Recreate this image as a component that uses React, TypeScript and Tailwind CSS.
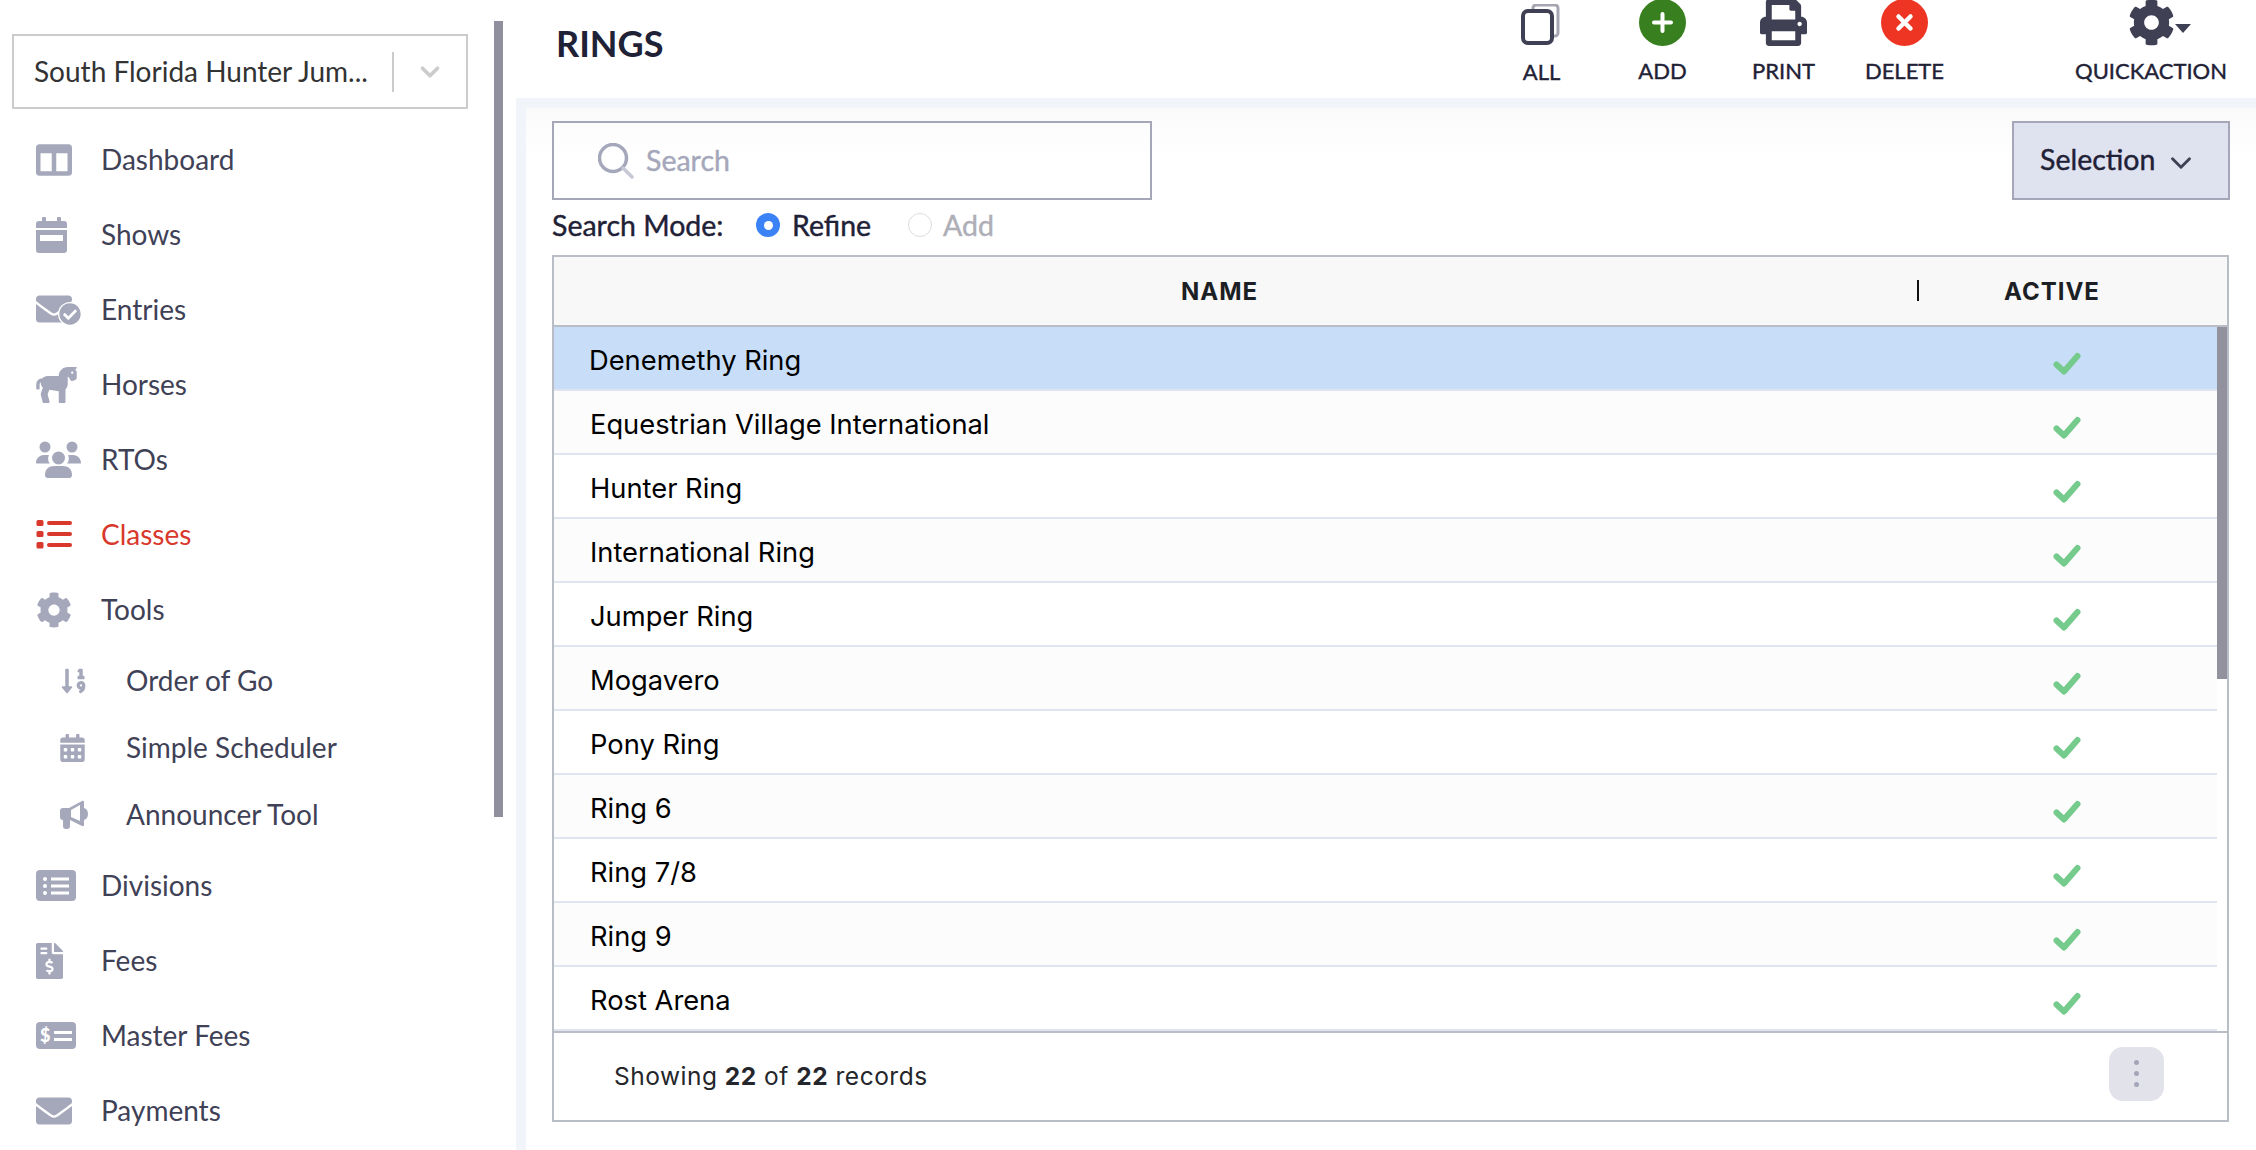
import type { ReactNode } from 'react';
import {
  FaCalendarAlt,
  FaCheckCircle,
  FaCog,
  FaColumns,
  FaEnvelope,
  FaFileInvoiceDollar,
  FaHorse,
  FaPrint,
  FaSortNumericDown,
} from 'react-icons/fa';
import { ChevronDown } from 'lucide-react';

const lato = 'font-["Lato",sans-serif]';
const inter = 'font-["Inter",sans-serif]';
const medium = '[-webkit-text-stroke:0.4px_currentColor]';

const rings = [
  'Denemethy Ring',
  'Equestrian Village International',
  'Hunter Ring',
  'International Ring',
  'Jumper Ring',
  'Mogavero',
  'Pony Ring',
  'Ring 6',
  'Ring 7/8',
  'Ring 9',
  'Rost Arena',
];

function ShowsIcon() {
  return (
    <svg viewBox="0 0 31 36" className="h-[36px] w-[31px]" fill="currentColor">
      <path d="M7 0h2a1 1 0 0 1 1 1v3h11V1a1 1 0 0 1 1-1h2a1 1 0 0 1 1 1v3h3a3 3 0 0 1 3 3v4H0V7a3 3 0 0 1 3-3h3V1a1 1 0 0 1 1-1z" />
      <path fillRule="evenodd" d="M0 13h31v20a3 3 0 0 1-3 3H3a3 3 0 0 1-3-3V13zm4 5v6h23v-6H4z" />
    </svg>
  );
}

function EntriesIcon() {
  return (
    <span className="relative block h-[30px] w-[45px]">
      <FaEnvelope className="absolute left-0 top-[-4px] h-[36px] w-[36px]" />
      <span className="absolute right-[-1px] top-[7px] flex h-[24px] w-[24px] items-center justify-center rounded-full bg-white">
        <FaCheckCircle className="h-[22px] w-[22px]" />
      </span>
    </span>
  );
}

function RtosIcon() {
  return (
    <svg viewBox="0 0 45 37" className="h-[37px] w-[45px]" fill="currentColor">
      <circle cx="9" cy="6" r="5.5" />
      <circle cx="36" cy="6" r="5.5" />
      <circle cx="22.5" cy="17" r="6.5" />
      <path d="M0 22c0-5 4-8 8-8h5c-1 2-1.500 6 1 8.500H1.500C.5 22.500 0 22.500 0 22z" />
      <path d="M45 22c0-5-4-8-8-8h-5c1 2 1.500 6-1 8.500h12.500c1 0 1.500 0 1.500-.5z" />
      <path d="M9 34c0-6 4-9 9-9h9c5 0 9 3 9 9 0 2-1 3-3 3H12c-2 0-3-1-3-3z" />
    </svg>
  );
}

function ClassesIcon() {
  return (
    <svg viewBox="0 0 36 29" className="h-[29px] w-[36px]" fill="currentColor">
      <rect x="0.500" y="0" width="7" height="6" rx="1.500" />
      <rect x="0.500" y="11" width="7" height="6" rx="1.500" />
      <rect x="0.500" y="22" width="7" height="6.500" rx="1.500" />
      <rect x="11" y="1" width="25" height="4" rx="2" />
      <rect x="11" y="12" width="25" height="4" rx="2" />
      <rect x="11" y="23" width="25" height="4" rx="2" />
    </svg>
  );
}

function AnnouncerIcon() {
  return (
    <svg viewBox="0 0 28 29" className="h-[29px] w-[28px]" fill="currentColor">
      <path d="M3 8h6l13-7c1-.500 2 0 2 1v23c0 1-1 1.500-2 1L10 20H3c-2 0-3-1-3-3v-6c0-2 1-3 3-3z" />
      <path fillRule="evenodd" d="M24 8c2.500.500 4 3 4 6s-1.500 5.500-4 6V8z" />
      <path d="M3 20h7v6c0 2-1 3-3 3H6c-2 0-3-1-3-3v-6z" />
      <path d="M11 10l9-5v16l-9-4z" fill="white" />
    </svg>
  );
}

function DivisionsIcon() {
  return (
    <svg viewBox="0 0 40 31" className="h-[31px] w-[40px]" fill="currentColor">
      <rect width="40" height="31" rx="4" />
      <circle cx="9" cy="9" r="2" fill="white" />
      <circle cx="9" cy="16" r="2" fill="white" />
      <circle cx="9" cy="23" r="2" fill="white" />
      <rect x="15" y="7.500" width="18" height="3" fill="white" />
      <rect x="15" y="14.500" width="18" height="3" fill="white" />
      <rect x="15" y="21.500" width="18" height="3" fill="white" />
    </svg>
  );
}

function MasterFeesIcon() {
  return (
    <svg viewBox="0 0 40 27" className="h-[27px] w-[40px]" fill="currentColor">
      <rect width="40" height="27" rx="4" />
      <rect x="18" y="9" width="18" height="3" fill="white" />
      <rect x="18" y="16" width="18" height="3" fill="white" />
      <text x="4" y="20" fontSize="18" fontWeight="900" fill="white" fontFamily="Lato, sans-serif">$</text>
    </svg>
  );
}

function CopyIcon() {
  return (
    <svg viewBox="0 0 39 41" className="-ml-[3px] mb-[1px] h-[41px] w-[39px]" fill="none">
      <path d="M12 5V4a3 3 0 0 1 3-3h19a3 3 0 0 1 3 3v25a3 3 0 0 1-3 3h-1" stroke="#a5a6b2" strokeWidth="3" />
      <rect x="2" y="7" width="29" height="32" rx="5" stroke="#3f4053" strokeWidth="4" fill="white" />
    </svg>
  );
}

function AddIcon() {
  return (
    <svg viewBox="0 0 47 47" className="h-[47px] w-[47px]">
      <circle cx="23.500" cy="23.500" r="23.500" fill="#38801f" />
      <path d="M23.500 15v17M15 23.500h17" stroke="white" strokeWidth="4" strokeLinecap="round" />
    </svg>
  );
}

function DeleteIcon() {
  return (
    <svg viewBox="0 0 47 47" className="h-[47px] w-[47px]">
      <circle cx="23.500" cy="23.500" r="23.500" fill="#ee3524" />
      <path d="M17.500 17.500l12 12M29.500 17.500l-12 12" stroke="white" strokeWidth="4.500" strokeLinecap="round" />
    </svg>
  );
}

function CheckIcon() {
  return (
    <svg viewBox="0 0 28 23" className="h-[23px] w-[28px] translate-y-[5px]" fill="none">
      <path d="M3.500 12.500l7.500 7L24.500 4" stroke="#74cb8c" strokeWidth="6" strokeLinecap="round" strokeLinejoin="round" />
    </svg>
  );
}

function NavItem({ icon, label, active }: { icon: ReactNode; label: string; active?: boolean }) {
  return (
    <div className={`flex h-[75px] items-center pl-[36px] ${active ? 'text-[#d9382c]' : 'text-[#a5a8bb]'}`}>
      <div className="flex w-[65px] items-center">{icon}</div>
      <span className={`-translate-y-[1.5px] text-[28px] ${active ? 'text-[#d9382c]' : 'text-[#3f4156]'}`}>{label}</span>
    </div>
  );
}

function SubItem({ icon, label }: { icon: ReactNode; label: string }) {
  return (
    <div className="flex h-[67px] items-center pl-[60px] text-[#a5a8bb]">
      <div className="flex w-[66px] items-center">{icon}</div>
      <span className="-translate-y-[1.5px] text-[28px] text-[#3f4156]">{label}</span>
    </div>
  );
}

function Action({ icon, label, low }: { icon: ReactNode; label: string; low?: boolean }) {
  return (
    <div className="flex w-[121px] flex-col items-center">
      <div className="flex h-[46px] items-end justify-center">{icon}</div>
      <span className={`text-[22px] leading-[21px] text-[#1f2136] ${medium} ${low ? 'mt-[15px]' : 'mt-[14px]'}`}>{label}</span>
    </div>
  );
}

function Sidebar() {
  return (
    <aside className={`relative h-full w-[516px] shrink-0 overflow-hidden bg-white ${lato}`}>
      <div className="absolute right-[13px] top-[21px] h-[796px] w-[9px] bg-[#8f8f9d]" />
      <div className="pl-[12px] pt-[34px]">
        <div className="flex h-[75px] w-[456px] items-center border-2 border-[#cccccc] pl-[20px]">
          <span className="w-[358px] -translate-y-[1px] whitespace-nowrap text-[28px] text-[#333333]">South Florida Hunter Jum...</span>
          <div className="mr-[21px] h-[40px] w-[2px] bg-[#cccccc]" />
          <ChevronDown className="h-[30px] w-[30px] text-[#cccccc]" strokeWidth={3} />
        </div>
      </div>
      <nav className="pt-[13px]">
        <NavItem label="Dashboard" icon={<FaColumns className="h-[36px] w-[36px]" />} />
        <NavItem label="Shows" icon={<ShowsIcon />} />
        <NavItem label="Entries" icon={<EntriesIcon />} />
        <NavItem label="Horses" icon={<FaHorse className="h-[36px] w-[41px]" />} />
        <NavItem label="RTOs" icon={<RtosIcon />} />
        <NavItem label="Classes" active icon={<ClassesIcon />} />
        <NavItem label="Tools" icon={<FaCog className="h-[36px] w-[36px]" />} />
        <SubItem label="Order of Go" icon={<FaSortNumericDown className="h-[28px] w-[28px]" />} />
        <SubItem label="Simple Scheduler" icon={<FaCalendarAlt className="h-[28px] w-[25px]" />} />
        <SubItem label="Announcer Tool" icon={<AnnouncerIcon />} />
        <NavItem label="Divisions" icon={<DivisionsIcon />} />
        <NavItem label="Fees" icon={<FaFileInvoiceDollar className="h-[36px] w-[27px]" />} />
        <NavItem label="Master Fees" icon={<MasterFeesIcon />} />
        <NavItem label="Payments" icon={<FaEnvelope className="h-[36px] w-[36px]" />} />
      </nav>
    </aside>
  );
}

function Header() {
  return (
    <header className={`flex h-[98px] shrink-0 items-start bg-white pl-[40px] ${lato}`}>
      <h1 className="mt-[21px] w-[925px] text-[36px] font-bold leading-[44px] text-[#1f2136]">RINGS</h1>
      <div className="flex">
        <Action label="ALL" low icon={<CopyIcon />} />
        <Action label="ADD" icon={<AddIcon />} />
        <Action label="PRINT" icon={<FaPrint className="h-[47px] w-[47px] text-[#3f4053]" />} />
        <Action label="DELETE" icon={<DeleteIcon />} />
        <div className="ml-[109px] flex w-[154px] flex-col items-center">
          <div className="flex h-[46px] items-end pl-[16px] text-[#3f4053]">
            <FaCog className="h-[47px] w-[47px]" />
            <span className="mb-[13px] h-0 w-0 border-x-[8px] border-t-[9px] border-x-transparent border-t-[#3f4053]" />
          </div>
          <span className={`mt-[14px] whitespace-nowrap text-[22px] leading-[21px] text-[#1f2136] ${medium}`}>QUICKACTION</span>
        </div>
      </div>
    </header>
  );
}

function RingsTable() {
  return (
    <div className={`mt-[14px] flex h-[867px] w-[1677px] flex-col border-2 border-[#b9bdc6] bg-white ${inter}`}>
      <div className="flex h-[70px] shrink-0 items-center border-b-2 border-[#b9bdc6] bg-[#f8f8f8] text-[24px] font-bold tracking-[1px] text-[#1c1f24]">
        <div className="w-[1363px] translate-y-[1px] pr-[32px] text-center">NAME</div>
        <div className="h-[21px] w-[2px] -translate-y-[1px] bg-[#111111]" />
        <div className="flex-1 translate-y-[1px] pl-[85px]">ACTIVE</div>
      </div>
      <div className="relative h-[704px] shrink-0 overflow-hidden">
        <div className="absolute right-[0px] top-0 h-[352px] w-[10px] bg-[#92929f]" />
        {rings.map((name, i) => (
          <div
            key={name}
            className={`mr-[10px] flex h-[64px] items-center justify-between border-b-2 border-[#e0e3f0] pl-[36px] pr-[136px] text-[27.300px] text-black ${
              i === 0 ? 'bg-[#c7ddf8]' : i % 2 === 1 ? 'bg-[#fcfcfc]' : 'bg-white'
            }`}
          >
            <span className={`translate-y-[3px] ${i === 0 ? '-ml-[1px]' : ''}`}>{name}</span>
            <CheckIcon />
          </div>
        ))}
      </div>
      <div className="flex flex-1 items-center justify-between border-t-2 border-[#b9bdc6] pl-[60px] pr-[63px]">
        <span className="text-[24.500px] tracking-[0.5px] text-[#24262b]">
          Showing <b className="font-bold">22</b> of <b className="font-bold">22</b> records
        </span>
        <button className="mb-[6px] flex h-[54px] w-[55px] flex-col items-center justify-center gap-[6px] rounded-[14px] bg-[#e2e3ea]">
          <span className="h-[5px] w-[5px] rounded-full bg-[#a3a5b8]" />
          <span className="h-[5px] w-[5px] rounded-full bg-[#a3a5b8]" />
          <span className="h-[5px] w-[5px] rounded-full bg-[#a3a5b8]" />
        </button>
      </div>
    </div>
  );
}

export default function App() {
  return (
    <div className="flex h-[1150px] w-[2256px] overflow-hidden bg-white">
      <Sidebar />
      <main className="flex min-w-0 flex-1 flex-col">
        <Header />
        <div className="flex flex-1 flex-col border-t-[10px] border-l-[10px] border-[#f1f4f8] bg-gradient-to-b from-[#fafafa] to-white to-[50px] pl-[26px] pt-[13px]">
          <div className={`flex h-[79px] w-[1678px] items-center justify-between ${lato}`}>
            <div className="flex h-full w-[600px] items-center border-2 border-[#a5a6b8] pl-[44px]">
              <svg viewBox="0 0 36 36" className="h-[36px] w-[36px]" fill="none">
                <circle cx="15" cy="15" r="13.500" stroke="#a5a8bb" strokeWidth="3.500" />
                <path d="M25 25l9 9" stroke="#c6c8d3" strokeWidth="3.500" strokeLinecap="round" />
              </svg>
              <span className={`ml-[12px] text-[28.500px] text-[#a5a8bb] ${medium}`}>Search</span>
            </div>
            <button className={`flex h-full w-[218px] items-center border-2 border-[#a5a6b8] bg-[#dfe2ef] pl-[26px] text-[28.500px] text-[#1f2136]`}>
              <span className={`-translate-y-[1.5px] ${medium}`}>Selection</span>
              <ChevronDown className="ml-[9px] mt-[4px] h-[34px] w-[34px] text-[#3f4053]" strokeWidth={2} />
            </button>
          </div>
          <div className={`mt-[9px] flex h-[32px] items-center text-[28.500px] ${medium} ${lato}`}>
            <span className="w-[204px] text-[#1f2136]">Search Mode:</span>
            <span className="flex h-[24px] w-[24px] items-center justify-center rounded-full bg-[#3b82f6]">
              <span className="h-[9px] w-[9px] rounded-full bg-white" />
            </span>
            <span className="ml-[12px] w-[116px] text-[#1f2136]">Refine</span>
            <span className="h-[24px] w-[24px] rounded-full border border-[#dddddd] bg-white" />
            <span className="ml-[11px] text-[#aeaeb6]">Add</span>
          </div>
          <RingsTable />
        </div>
      </main>
    </div>
  );
}
